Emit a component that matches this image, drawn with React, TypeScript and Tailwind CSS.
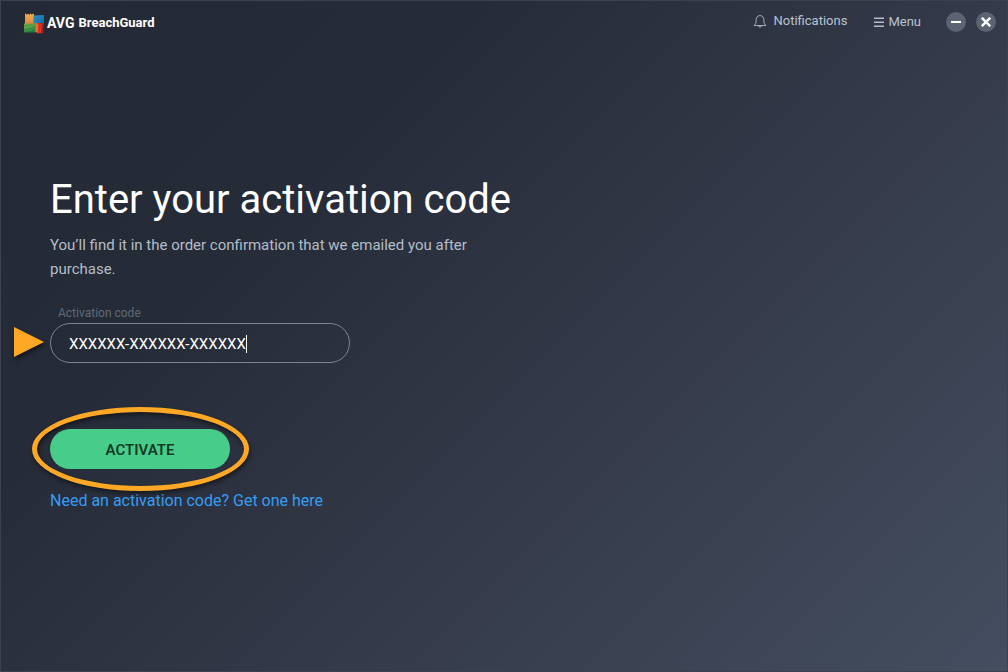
import { useState } from "react";

function Logo() {
  return (
    <svg className="h-[21px] w-[21px]" viewBox="0 0 21 21" aria-hidden="true">
      <defs>
        <linearGradient id="orange" x1="0" y1="0" x2="0" y2="1">
          <stop offset="0" stopColor="#f0b04a" />
          <stop offset="1" stopColor="#e08743" />
        </linearGradient>
        <linearGradient id="blue" x1="0" y1="0" x2="1" y2="1">
          <stop offset="0" stopColor="#2f8fc6" />
          <stop offset="1" stopColor="#0f6aa2" />
        </linearGradient>
        <linearGradient id="green" x1="0" y1="0" x2="0.4" y2="1">
          <stop offset="0" stopColor="#84ab45" />
          <stop offset="0.5" stopColor="#4b9a47" />
          <stop offset="1" stopColor="#1f7a43" />
        </linearGradient>
        <linearGradient id="red" x1="0" y1="0" x2="1" y2="0">
          <stop offset="0" stopColor="#e8602a" />
          <stop offset="0.45" stopColor="#d5301f" />
          <stop offset="1" stopColor="#8e1a1c" />
        </linearGradient>
      </defs>
      <path d="M1 .8h1.200v.6h1.300V.8h1.200v.6H6V.8h1.200v.6h1.300V.8H10V11H1z" fill="url(#orange)" />
      <path d="M9.500 2.500 20 2v2.400l-.4.6.4.6v1.600l-.4.6.4.6V11H9.500z" fill="url(#blue)" />
      <path d="M0 10.500 9 10.500 12 9v10.500H0v-2l.4-.6-.4-.6v-1.800l.4-.6-.4-.6z" fill="url(#green)" />
      <path d="M11 10h9l-.8 10.500h-1.300v-.5h-1.200v.5h-1.300v-.5h-1.200v.5h-1.300l-.4-1.500H11z" fill="url(#red)" />
      <path d="M0 14c4 .2 8-.8 11-3v1.200C8 14.500 4 15.400 0 15.200z" fill="#a3c552" opacity=".35" />
      <path d="M0 17.500c4 .2 8-.8 11-3v1C8 18 4 18.700 0 18.500z" fill="#5cb04c" opacity=".4" />
      <path d="M12 10.500h1.600c.7 3 .5 6-.3 8.500h-1.500c.7-3 .8-6 .2-8.500z" fill="#f59a31" opacity=".6" />
      <path d="M16.500 11h1.200l-1 9h-1.200c.8-3 1.200-6 1-9z" fill="#f0482a" opacity=".7" />
    </svg>
  );
}

function BellIcon() {
  return (
    <svg className="h-3.5 w-3.5" viewBox="0 0 14 14" fill="none" stroke="#a9b0bc" aria-hidden="true">
      <path d="M1 11.500h12c-1.400-1.100-2.100-2-2.100-5.200C10.900 3.300 9.400 1.600 7 1.600S3.100 3.300 3.100 6.300c0 3.200-.7 4.100-2.100 5.200z" strokeLinejoin="round" />
      <path d="M5.600 12c.3.900.8 1.200 1.400 1.200s1.100-.3 1.400-1.200" />
    </svg>
  );
}

function MenuIcon() {
  return (
    <svg className="h-2.5 w-2.5" viewBox="0 0 10 10" stroke="#b4bdca" strokeWidth="1.400" aria-hidden="true">
      <path d="M0 1.300h10M0 5.300h10M0 9.300h10" />
    </svg>
  );
}

export default function App() {
  const [code, setCode] = useState("XXXXXX-XXXXXX-XXXXXX");

  return (
    <div className="flex min-h-screen flex-col border border-[#3b414e] bg-[linear-gradient(135deg,#242a35_0%,#252b37_28%,#353b4a_62%,#444e60_100%)] font-['Roboto',sans-serif]">
      <header className="flex items-start justify-between pt-2.5 pr-[11px] pl-[23px]">
        <div className="flex h-6 items-center text-white">
          <Logo />
          <span className="ml-0.5 text-sm leading-6 font-bold">AVG</span>
          <span className="ml-1 text-[13px] leading-6 font-bold">BreachGuard</span>
        </div>
        <nav className="flex h-[22px] items-center">
          <button type="button" className="flex items-center gap-[7px] pb-0.5 text-[13px] text-[#b9c2cf]">
            <BellIcon />
            Notifications
          </button>
          <button type="button" className="ml-[27px] flex items-center gap-1 text-[13px] text-[#b9c2cf]">
            <MenuIcon />
            Menu
          </button>
          <button type="button" aria-label="Minimize" className="ml-[25px] flex h-5 w-5 items-center justify-center rounded-full bg-[#5c6373]">
            <svg className="h-2.5 w-2.5" viewBox="0 0 10 10" stroke="#fff" strokeWidth="2">
              <path d="M0 5h10" />
            </svg>
          </button>
          <button type="button" aria-label="Close" className="ml-2.5 flex h-5 w-5 items-center justify-center rounded-full bg-[#5c6373]">
            <svg className="h-2.5 w-2.5" viewBox="0 0 10 10" stroke="#fff" strokeWidth="2.400">
              <path d="M.8.8l8.400 8.400M9.200.8.8 9.200" />
            </svg>
          </button>
        </nav>
      </header>

      <main className="flex flex-col items-start px-[49px] pt-[141px]">
        <h1 className="text-[40px] leading-[48px] text-white">Enter your activation code</h1>
        <p className="mt-[9px] max-w-[440px] text-[15px] leading-6 text-[#b4bdc9]">
          You’ll find it in the order confirmation that we emailed you after purchase.
        </p>
        <label htmlFor="code" className="mt-6 ml-2 text-xs leading-4 text-[#626976]">
          Activation code
        </label>
        <div className="relative mt-0.5 w-[300px]">
          <svg className="absolute top-1 -left-9 h-8 w-8 drop-shadow-[1px_3px_2px_rgba(0,0,0,0.5)]" viewBox="0 0 32 32" aria-hidden="true">
            <path d="M0 0v30l30-15z" fill="#ffa826" />
          </svg>
          <input
            id="code"
            type="text"
            value={code}
            onChange={(e) => setCode(e.target.value)}
            className="block h-10 w-full rounded-full border border-[#7c8492] bg-transparent px-[18px] pt-0.5 text-[15px] text-white caret-transparent outline-none"
          />
          <span className="absolute top-3 left-[196px] h-[18px] w-px bg-white" />
        </div>
        <div className="relative mt-[66px]">
          <button type="button" className="h-10 w-[180px] rounded-full bg-[#47cd89] pt-0.5 text-[15px] font-semibold text-[#133b25]">
            ACTIVATE
          </button>
          <span className="pointer-events-none absolute -top-[22px] -left-[18px] h-[84px] w-[217px] rounded-[50%] border-5 border-[#ffa826] shadow-[1px_3px_4px_rgba(0,0,0,0.45),inset_1px_3px_4px_rgba(0,0,0,0.45)]" />
        </div>
        <a href="#get-code" className="mt-5 text-base leading-6 text-[#359df4]">
          Need an activation code? Get one here
        </a>
      </main>
    </div>
  );
}
